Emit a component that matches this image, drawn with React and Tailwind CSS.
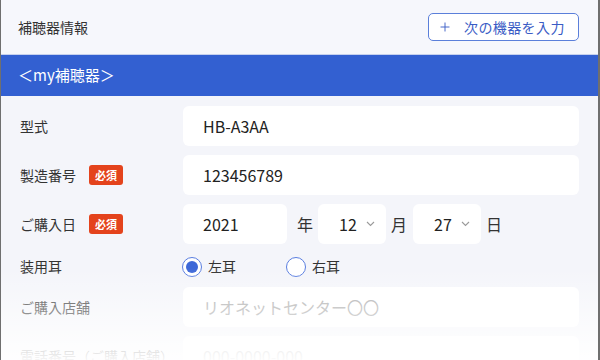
import React from "react";
import { Plus } from "lucide-react";

const font = { fontFamily: '"Noto Sans CJK JP", "Noto Sans", sans-serif' };

function Badge() {
  return (
    <span className="ml-[13px] inline-flex items-center justify-center w-[34px] h-[20px] rounded-[3px] bg-[#e4431c] text-white text-[11px] font-bold leading-none">
      必須
    </span>
  );
}

function Chevron() {
  return (
    <svg width="9" height="6" viewBox="0 0 9 6" className="ml-auto mr-[11px]">
      <path d="M1 1l3.5 3.5L8 1" fill="none" stroke="#9a9a9a" strokeWidth="1.1" />
    </svg>
  );
}

function Row({ label, badge, children }) {
  return (
    <div className="flex items-center h-[40px]">
      <div className="w-[163px] flex items-center text-[14px] text-[#333]">
        <span>{label}</span>
        {badge && <Badge />}
      </div>
      <div className="flex-1 flex items-center h-full">{children}</div>
    </div>
  );
}

function Input({ value, placeholder }) {
  return (
    <div className="flex-1 h-full bg-white rounded-[6px] flex items-center pl-[20px] text-[16px]">
      {value ? (
        <span className="text-[#222]">{value}</span>
      ) : (
        <span className="text-[#a8a8a8]">{placeholder}</span>
      )}
    </div>
  );
}

function Radio({ checked, label, className }) {
  return (
    <div className={"flex items-center " + (className || "")}>
      <span className="w-[20px] h-[20px] rounded-full border-[1.5px] border-[#5a7ee0] bg-white flex items-center justify-center -ml-[1px]">
        {checked && <span className="w-[12px] h-[12px] rounded-full bg-[#3d68d8]" />}
      </span>
      <span className="ml-[6px] text-[14px] text-[#333]">{label}</span>
    </div>
  );
}

export default function App() {
  return (
    <div
      className="relative w-[600px] h-[360px] overflow-hidden bg-[#f4f5fa] border-l border-r-2 border-[#6f6f6f]"
      style={font}
    >
      <div className="h-[55px] flex items-center justify-between pl-[17px] pr-[19px] bg-[#f6f7fc] border-b border-[#c6d1ee]">
        <span className="text-[14px] text-[#333]">補聴器情報</span>
        <div className="h-[28px] w-[151px] flex items-center pl-[9px] border border-[#5b7fda] rounded-[5px] bg-white text-[#3a5cc5] text-[14px]">
          <Plus size={14} strokeWidth={1.6} />
          <span className="ml-[12px] tracking-[0.4px]">次の機器を入力</span>
        </div>
      </div>
      <div className="h-[41px] bg-[#3360d1] pl-[17px] flex items-center text-white text-[15px]">
        ＜my補聴器＞
      </div>
      <div className="pt-[10px] pl-[19px] pr-[19px] flex flex-col gap-[9px]">
        <Row label="型式">
          <Input value="HB-A3AA" />
        </Row>
        <Row label="製造番号" badge>
          <Input value="123456789" />
        </Row>
        <Row label="ご購入日" badge>
          <div className="w-[104px] h-full bg-white rounded-[6px] flex items-center pl-[20px] text-[16px] text-[#222]">
            2021
          </div>
          <span className="ml-[10px] mr-[5px] text-[16px] text-[#333]">年</span>
          <div className="w-[68px] h-full bg-white rounded-[6px] flex items-center pl-[21px] text-[16px] text-[#222]">
            12
            <Chevron />
          </div>
          <span className="ml-[5px] mr-[6px] text-[16px] text-[#333]">月</span>
          <div className="w-[68px] h-full bg-white rounded-[6px] flex items-center pl-[21px] text-[16px] text-[#222]">
            27
            <Chevron />
          </div>
          <span className="ml-[5px] text-[16px] text-[#333]">日</span>
        </Row>
        <div className="flex items-center h-[25px] pt-[2px]">
          <div className="w-[163px] text-[14px] text-[#333]">装用耳</div>
          <Radio checked label="左耳" className="w-[104px]" />
          <Radio label="右耳" />
        </div>
        <Row label="ご購入店舗">
          <Input placeholder="リオネットセンター〇〇" />
        </Row>
        <Row label="電話番号（ご購入店舗）">
          <Input placeholder="000-0000-000" />
        </Row>
      </div>
      <div className="pointer-events-none absolute left-0 right-0 bottom-0 h-[92px] bg-gradient-to-b from-transparent to-white/95" />
    </div>
  );
}
